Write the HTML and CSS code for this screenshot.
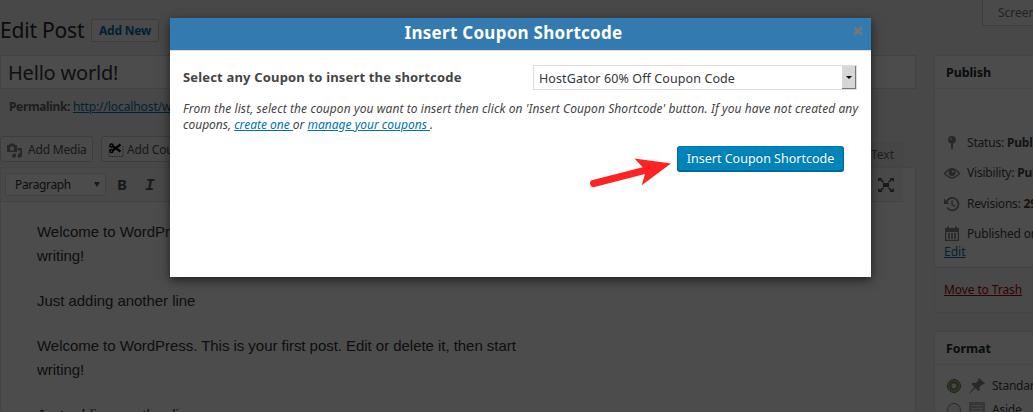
FILE: index.html
```html
<!DOCTYPE html>
<html lang="en">
<head>
<meta charset="utf-8">
<title>Edit Post</title>
<link rel="stylesheet" href="styles.css">
</head>
<body>
<div class="page">
  <main class="main">
    <div class="heading"><h1>Edit Post</h1><a class="add-new">Add New</a></div>
    <div class="title-input"><span>Hello world!</span></div>
    <div class="permalink"><b>Permalink:</b> <a>http://localhost/wp/</a></div>
    <div class="media-row">
      <div class="media-btn">
        <svg class="ic-media" width="16" height="15" viewBox="0 0 16 15"><path fill="#82878c" fill-rule="evenodd" d="M0 2h2L3 .5h4L8 2h2v7H0zM5 3.300a2.200 2.200 0 1 0 0 4.400 2.200 2.200 0 0 0 0-4.400z"/><path fill="#82878c" d="M10.500 5H15v7.500a2.200 2.200 0 1 1-1.800-2.200V7.500h-2.700zM6.500 10.500H9v2.300a2 2 0 1 1-2.500-1.900z"/></svg>
        <span>Add Media</span>
      </div>
      <div class="media-btn coupon">
        <svg width="16" height="14" viewBox="0 0 16 14"><path d="M1 3.500V13.500H15V3.500" fill="none" stroke="#777" stroke-dasharray="1.500 1"/><g fill="none" stroke="#000" stroke-width="1.500"><circle cx="3.500" cy="2.500" r="1.500"/><circle cx="3.500" cy="8" r="1.500"/><path stroke-width="2.200" d="M4.700 3.200L12.500 8.500M4.700 7.300L12.500 1.500"/></g></svg>
        <span>Add Coupon</span>
      </div>
      <div class="tab">Text</div>
    </div>
    <div class="editor">
      <div class="toolbar">
        <div class="format"><span>Paragraph</span><i></i></div>
        <b class="bold">B</b>
        <em class="ital">I</em>
        <svg class="full" width="16" height="14" viewBox="0 0 16 14"><g fill="#50575e"><path d="M0 0h4.500L3.500 1.200 6 3.800 5 4.800 2 2.200 0 4zM16 0h-4.500l1 1.200L10 3.800l1 1L14 2.200 16 4zM0 14h4.500l-1-1.200L6 10.200l-1-1-3 2.600L0 10zM16 14h-4.500l1-1.200L10 10.200l1-1 3 2.600 2-1.800zM5 5h6v4H5z"/></g></svg>
      </div>
      <div class="content">
        <p>Welcome to WordPress. This is your first post. Edit or delete it, then start writing!</p>
        <p>Just adding another line</p>
        <p>Welcome to WordPress. This is your first post. Edit or delete it, then start writing!</p>
        <p>Just adding another line</p>
      </div>
    </div>
  </main>
  <aside class="side">
    <div class="screen"><span>Screen Options</span></div>
    <section class="box publish">
      <h2>Publish</h2>
      <div class="misc">
        <div class="row"><svg width="16" height="16" viewBox="0 0 16 16"><path fill="#82878c" d="M8 1a3.800 3.800 0 0 1 1 7.500V13l-1 2-1-2V8.500A3.800 3.800 0 0 1 8 1z"/><circle cx="7" cy="3.800" r="1" fill="#ddd"/></svg><span>Status: <b>Published</b></span></div>
        <div class="row"><svg width="16" height="16" viewBox="0 0 16 16"><path fill="none" stroke="#82878c" stroke-width="1.300" d="M.700 8.500Q8-1 15.300 8.500 8 17 .700 8.500z"/><circle cx="8" cy="7.500" r="3.500" fill="#82878c"/><circle cx="9" cy="6.500" r="1.100" fill="#fff"/></svg><span>Visibility: <b>Public</b></span></div>
        <div class="row"><svg width="16" height="16" viewBox="0 0 16 16"><path fill="none" stroke="#82878c" stroke-width="1.800" d="M2.300 6.500a6.200 6.200 0 1 1 .8 5"/><path fill="#82878c" d="M0 2.500v5.500h5.500z"/><path fill="none" stroke="#82878c" stroke-width="1.500" d="M8 4.500v4l3 2"/></svg><span>Revisions: <b>29</b></span></div>
        <div class="row"><svg width="16" height="16" viewBox="0 0 16 16"><path fill="#82878c" fill-rule="evenodd" d="M1 2h2V.500h2V2h6V.500h2V2h2v13H1zM2.300 6v7.700h11.400V6z"/><path stroke="#82878c" stroke-width="1.700" d="M5 7v5.700M8 7v5.700M11 7v5.700"/></svg><span>Published on</span></div>
        <a class="edit">Edit</a>
      </div>
      <div class="major"><a>Move to Trash</a></div>
    </section>
    <section class="box">
      <h2>Format</h2>
      <div class="opts">
        <div class="opt"><i class="radio on"></i><svg width="16" height="16" viewBox="0 0 16 16"><path fill="#82878c" d="M10 0l6 5.500-1.500 1-1-.3-3 3 .3 3L9.500 13 6.500 10 .500 15.500 0 15.200 5.300 9 2.500 6l1-1.200 3.300.2 2.700-2.700L9.200.800z"/></svg><span>Standard</span></div>
        <div class="opt"><i class="radio"></i><svg width="16" height="16" viewBox="0 0 16 16"><path fill="#b4b9be" d="M0 0h16v16H0z"/><path stroke="#eee" d="M2.500 3.500h11M2.500 6.500h11M2.500 9.500h11M2.500 12.500h8"/></svg><span>Aside</span></div>
      </div>
    </section>
  </aside>
</div>
<div class="overlay"></div>
<div class="modal" role="dialog">
  <header><h3>Insert Coupon Shortcode</h3><svg class="close" width="10" height="10" viewBox="0 0 10 10"><path d="M1.200 1.200l7.600 7.600M8.800 1.200L1.200 8.800" stroke="#73777b" stroke-width="3"/></svg></header>
  <div class="body">
    <div class="field"><label>Select any Coupon to insert the shortcode</label>
      <div class="select"><span>HostGator 60% Off Coupon Code</span><div class="drop"><i></i></div></div></div>
    <p class="hint"><span class="l1">From the list, select the coupon you want to insert then click on 'Insert Coupon Shortcode' button. If you have not created any</span><br><span class="l2">coupons, <a>create one </a>or <a>manage your coupons </a>.</span></p>
    <div class="actions"><button class="primary">Insert Coupon Shortcode</button></div>
  </div>
</div>
<svg class="arrow" width="84" height="34" viewBox="0 0 84 34"><path fill="#ff2222" d="M82 9.500L45.500 4.500l8.200 8.800-50 12.800a3.500 3.500 0 0 0 1.600 6.900L56 20l-3.300 11.300z"/></svg>
</body>
</html>
```
FILE: styles.css
```css
* { box-sizing: border-box; }
body { margin: 0; width: 1033px; height: 412px; overflow: hidden; position: relative; background: #f1f1f1; color: #444; font: 12px/18px "Noto Sans", "Open Sans", sans-serif; }
a { color: #0073aa; text-decoration: underline; }
h1, h2, h3, p { margin: 0; }
span { white-space: nowrap; }
svg { flex: none; display: block; }
.page { display: flex; gap: 18px; height: 412px; overflow: hidden; }
.main { width: 916px; flex: none; }
.heading { height: 55px; padding-top: 19px; display: flex; gap: 7px; }
h1 { width: 84px; font-size: 21px; font-weight: 400; line-height: 23px; letter-spacing: -.2px; color: #23282d; white-space: nowrap; }
.add-new { width: 68px; height: 23px; border: 1px solid #ccc; border-radius: 2px; background: #f7f7f7; text-align: center; text-decoration: none; font-weight: 700; line-height: 21px; letter-spacing: -.2px; }
.title-input { height: 34px; border: 1px solid #ddd; background: #fff; padding-left: 7px; font-size: 20px; line-height: 34px; letter-spacing: -.2px; color: #32373c; }
.permalink { height: 47px; padding: 9px 0 0 9px; color: #666; letter-spacing: -.35px; }
.permalink a { letter-spacing: -.1px; }
.media-row { height: 31px; display: flex; gap: 8px; align-items: flex-start; }
.media-btn { width: 93px; height: 26px; border: 1px solid #ccc; border-radius: 3px; background: #f7f7f7; color: #555; display: flex; align-items: center; gap: 5px; padding: 2px 0 0 6px; letter-spacing: -.2px; }
.ic-media { margin-top: 1px; }
.coupon { width: 110px; gap: 3px; }
.tab { margin: 6px 13px 0 auto; width: 40px; height: 25px; border: 1px solid #e5e5e5; background: #ebebeb; color: #666; text-align: right; padding: 3px 8px 0 0; }
.editor { height: 300px; border: 1px solid #e5e5e5; background: #fff; }
.toolbar { width: 902px; height: 34px; background: #f5f5f5; border-bottom: 1px solid #ddd; display: flex; align-items: center; padding-left: 4px; }
.format { width: 101px; height: 23px; border: 1px solid #ddd; background: #fff; display: flex; align-items: center; justify-content: space-between; padding: 0 5px 0 9px; color: #333; font-size: 12px; letter-spacing: -.35px; }
.format i { border: 3px solid transparent; border-top: 5px solid #555; border-bottom: 0; }
.bold { margin: -2px 0 0 11px; font-size: 15px; color: #50575e; width: 28px; }
.ital { margin-top: 2px; font: italic 700 16px "Liberation Mono", monospace; color: #50575e; }
.full { margin: 0 9px 0 auto; }
.content { width: 530px; padding: 18px 0 0 36px; font: 15px/24px "Liberation Sans", Arial, sans-serif; letter-spacing: -.04px; color: #333; }
.content p { margin-bottom: 21px; }
.side { width: 300px; flex: none; }
.screen { margin-left: 48px; height: 26px; border: 1px solid #ccc; border-top: 0; background: #f7f7f7; padding: 4px 15px; color: #72777c; }
.box { border: 1px solid #e5e5e5; background: #fff; margin-bottom: 18px; }
.publish { margin-top: 29px; }
h2 { height: 33px; border-bottom: 1px solid #eee; padding-left: 11px; font-size: 12.500px; line-height: 33px; letter-spacing: -.1px; color: #23282d; }
.misc { height: 178px; padding: 39px 0 0 9px; }
.row { height: 30.300px; display: flex; gap: 7px; align-items: center; letter-spacing: -.2px; }
.edit { display: block; margin-top: -5px; line-height: 16px; }
.major { height: 45px; background: #f5f5f5; border-top: 1px solid #ddd; padding: 13px 9px; }
.major a { color: #a00; letter-spacing: -.1px; }
.opts { height: 100px; padding: 9px 0 0 12px; }
.opt { height: 24px; display: flex; align-items: center; gap: 8px; letter-spacing: -.25px; }
.opt span { margin-left: -1px; }
.radio { width: 14px; height: 14px; border: 1px solid #888; border-radius: 50%; background: #f5f5f5; }
.on { border: 1px solid #65715a; background: radial-gradient(circle, #eee 0 2px, #779159 3px 4px, #a7bf8c 5px); }
.overlay { position: absolute; inset: 0; background: rgba(0, 0, 0, .7); }
.modal { position: absolute; left: 170px; top: 18px; width: 701px; height: 259px; background: #fff; color: #444; box-shadow: 0 3px 10px rgba(0, 0, 0, .6); }
.modal header { height: 33px; background: #337ab0; border-bottom: 1px solid #ddd; display: flex; align-items: flex-start; padding: 0 8px 0 4px; }
h3 { flex: 1; text-align: center; color: #fff; font-size: 17px; line-height: 29px; letter-spacing: .28px; }
.close { margin-top: 8px; }
.body { padding: 14px 14px 0 13px; }
.field { display: flex; justify-content: space-between; height: 25px; }
label { font-size: 13px; font-weight: 700; line-height: 24px; letter-spacing: .17px; }
.select { width: 324px; height: 25px; border: 1px solid #ddd; display: flex; justify-content: space-between; padding-left: 5px; color: #32373c; line-height: 25px; font-size: 12.500px; letter-spacing: .1px; }
.drop { width: 14px; height: 23px; background: #d6d6d6; border-right: 1px solid #777; border-bottom: 1px solid #777; display: flex; align-items: center; justify-content: center; }
.drop i { border: 3px solid transparent; border-top-color: #000; border-bottom: 0; }
.hint { margin-top: 11px; font-size: 12px; line-height: 16px; font-style: italic; letter-spacing: .09px; }
.l2 { letter-spacing: 0; }
.actions { margin-top: 13px; display: flex; justify-content: flex-end; padding-right: 13px; }
.primary { width: 167px; height: 25px; padding: 0; border: 1px solid; border-color: #0073aa #006799 #006799; border-radius: 3px; background: #0085ba; box-shadow: 0 1px 0 #006799; color: #fff; font: 12.500px/23px "Noto Sans", sans-serif; letter-spacing: 0; white-space: nowrap; text-shadow: 0 -1px 1px #006799; }
.arrow { position: absolute; left: 589px; top: 154px; overflow: visible; }
```
